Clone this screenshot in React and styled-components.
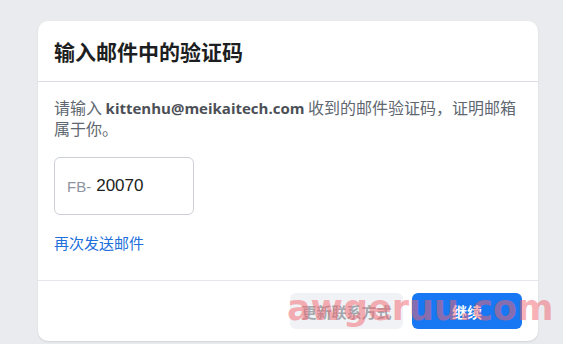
import React from "react";
import styled, { createGlobalStyle } from "styled-components";

const Global = createGlobalStyle`
  html, body {
    margin: 0;
    padding: 0;
    background: #e9ebee;
    font-family: "Segoe UI", "Liberation Sans", "Noto Sans CJK SC", sans-serif;
  }
`;

const Page = styled.div`
  position: relative;
  width: 563px;
  height: 344px;
  overflow: hidden;
  padding: 21px 0 0 38px;
  box-sizing: border-box;
`;

const Card = styled.div`
  width: 500px;
  height: 320px;
  background: #fff;
  border-radius: 10px;
  box-shadow: 0 1px 2px rgba(0, 0, 0, 0.1);
  display: flex;
  flex-direction: column;
`;

const Header = styled.div`
  height: 60px;
  border-bottom: 1px solid #dadde1;
  display: flex;
  align-items: center;
  padding: 0 16px;
`;

const Title = styled.h2`
  margin: 0;
  font-size: 21px;
  font-weight: 700;
  color: #1c1e21;
  font-family: "Noto Sans CJK SC", sans-serif;
`;

const Body = styled.div`
  flex: 1;
  padding: 15px 16px 0;
  border-bottom: 1px solid #e4e6eb;
`;

const Text = styled.p`
  margin: 0;
  font-size: 16px;
  line-height: 20px;
  color: #606770;
  font-family: "Noto Sans CJK SC", sans-serif;
`;

const Email = styled.b`
  font-family: "Open Sans", "Noto Sans CJK SC", sans-serif;
  font-size: 15px;
  font-weight: 700;
  color: #4b4f56;
`;

const CodeBox = styled.div`
  margin-top: 19px;
  width: 140px;
  height: 58px;
  border: 1px solid #ccd0d5;
  border-radius: 6px;
  display: flex;
  align-items: center;
  padding-left: 12px;
  box-sizing: border-box;
  font-family: "Liberation Sans", sans-serif;
`;

const Prefix = styled.span`
  font-size: 15px;
  color: #8d949e;
  margin-right: 5px;
`;

const Code = styled.span`
  font-size: 17px;
  color: #1c1e21;
`;

const Resend = styled.a`
  display: inline-block;
  margin-top: 17px;
  font-size: 15px;
  color: #216fdb;
  font-family: "Noto Sans CJK SC", sans-serif;
  text-decoration: none;
`;

const Footer = styled.div`
  height: 60px;
  display: flex;
  justify-content: flex-end;
  align-items: center;
  gap: 9px;
  padding: 0 16px;
`;

const Button = styled.button`
  height: 36px;
  padding: 0;
  border: none;
  border-radius: 6px;
  font-size: 15px;
  font-weight: 700;
  font-family: "Noto Sans CJK SC", sans-serif;
  background: ${(p) => (p.$primary ? "#1877f2" : "#f0f2f5")};
  color: ${(p) => (p.$primary ? "#fff" : "#a4a8ae")};
  width: ${(p) => p.$w}px;
`;

const Watermark = styled.div`
  position: absolute;
  left: 287px;
  top: 291px;
  font-family: "DejaVu Sans", sans-serif;
  font-size: 35px;
  line-height: 35px;
  font-weight: 700;
  color: rgba(242, 100, 110, 0.5);
  pointer-events: none;
`;

export default function App() {
  return (
    <>
      <Global />
      <Page>
        <Card>
          <Header>
            <Title>输入邮件中的验证码</Title>
          </Header>
          <Body>
            <Text>
              请输入 <Email>kittenhu@meikaitech.com</Email> 收到的邮件验证码，证明邮箱属于你。
            </Text>
            <CodeBox>
              <Prefix>FB-</Prefix>
              <Code>20070</Code>
            </CodeBox>
            <Resend href="#">再次发送邮件</Resend>
          </Body>
          <Footer>
            <Button $w={113}>更新联系方式</Button>
            <Button $primary $w={110}>继续</Button>
          </Footer>
        </Card>
        <Watermark>awgeruu.com</Watermark>
      </Page>
    </>
  );
}
